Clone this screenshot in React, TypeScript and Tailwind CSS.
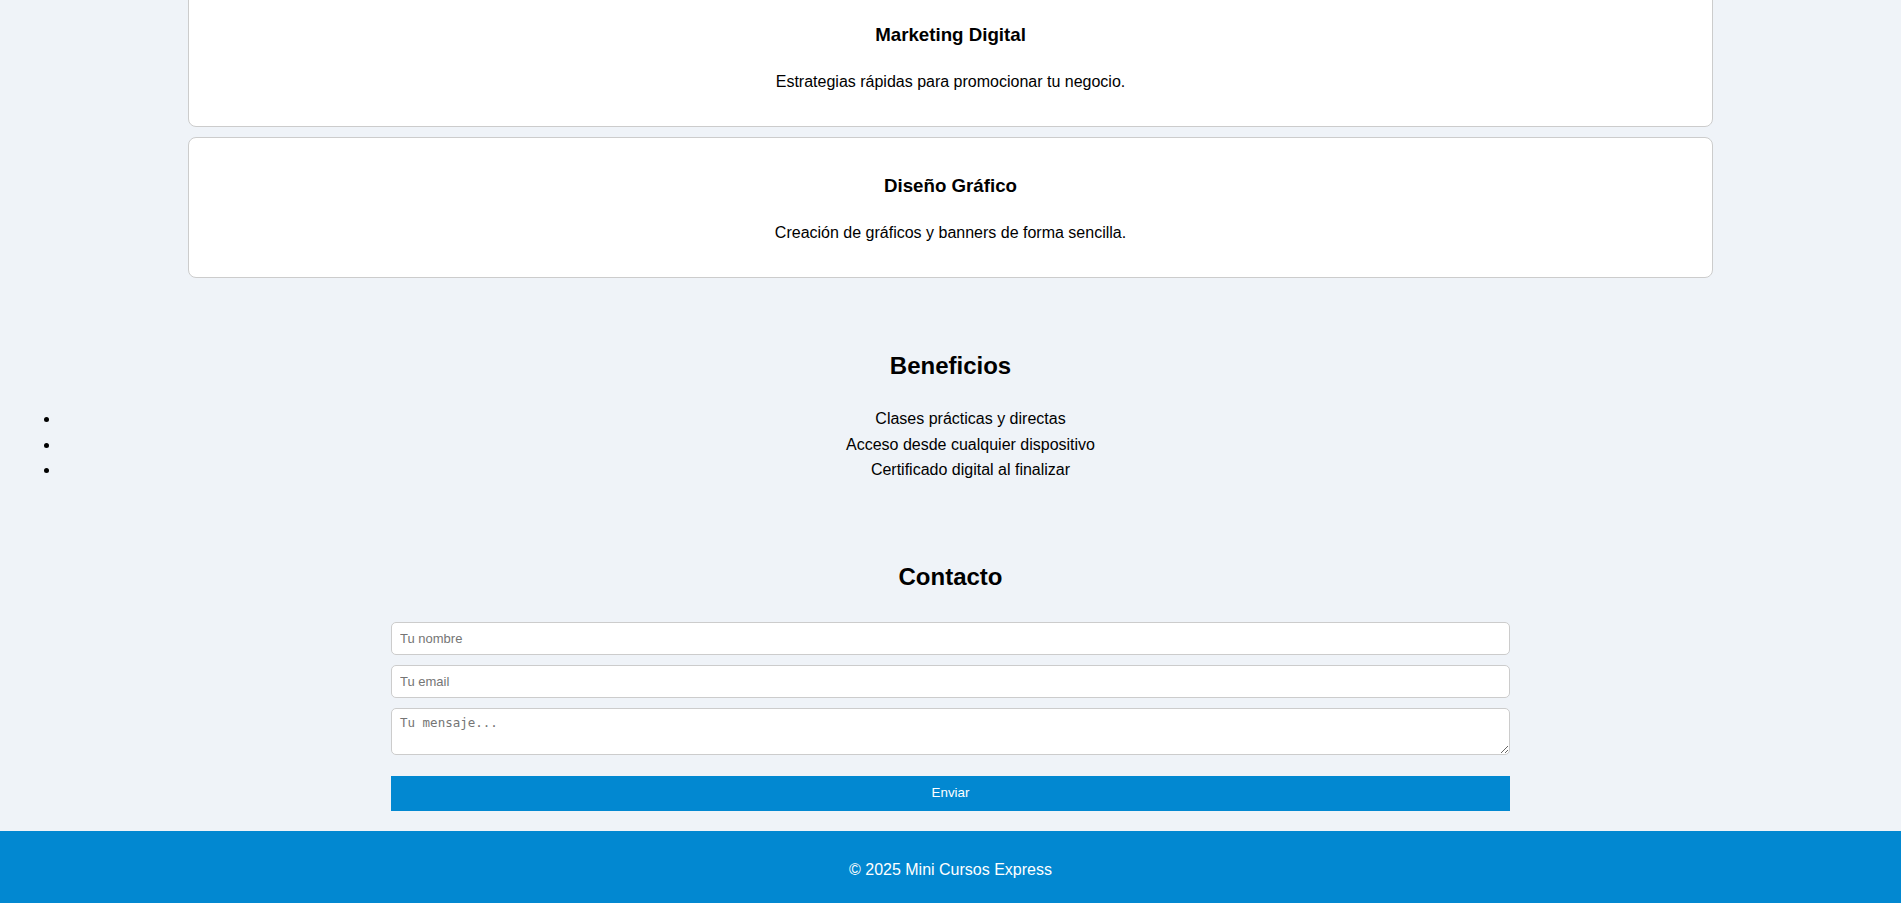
import React from "react";

const cursos = [
  { t: "Marketing Digital", d: "Estrategias rápidas para promocionar tu negocio." },
  { t: "Diseño Gráfico", d: "Creación de gráficos y banners de forma sencilla." },
];

export default function App() {
  return (
    <div className="min-h-screen overflow-hidden bg-[#eff3f8] text-black font-['Liberation_Sans',Arial,sans-serif] leading-[1.6]">
      <section className="w-[1525px] mx-auto -mt-[14px] flex flex-col gap-[10px]">
        {cursos.map((c) => (
          <div key={c.t} className="bg-white border border-[#cccccc] rounded-lg pt-[17px] px-4 pb-4 text-center">
            <h3 className="text-[18.72px] font-bold leading-[28px] mt-[17px] mb-[20px]">{c.t}</h3>
            <p className="text-[16px] leading-[25px] mb-4">{c.d}</p>
          </div>
        ))}
      </section>

      <section className="mt-[74px] text-center">
        <h2 className="text-[24px] font-bold leading-[28px]">Beneficios</h2>
        <ul className="mt-[26px] ml-[20px] list-disc pl-10 pr-[20px] text-[16px] leading-[25.5px]">
          <li>Clases prácticas y directas</li>
          <li>Acceso desde cualquier dispositivo</li>
          <li>Certificado digital al finalizar</li>
        </ul>
      </section>

      <section className="mt-[80px] text-center">
        <h2 className="text-[24px] font-bold leading-[28px]">Contacto</h2>
        <form className="w-[1119px] mx-auto mt-[31px] flex flex-col" onSubmit={(e) => e.preventDefault()}>
          <input
            type="text"
            placeholder="Tu nombre"
            className="w-full h-[33px] px-2 bg-white border border-[#cccccc] rounded-[5px] text-[13px] font-['Liberation_Sans',Arial,sans-serif] placeholder:text-[#757575] outline-none"
          />
          <input
            type="email"
            placeholder="Tu email"
            className="mt-[10px] w-full h-[33px] px-2 bg-white border border-[#cccccc] rounded-[5px] text-[13px] font-['Liberation_Sans',Arial,sans-serif] placeholder:text-[#757575] outline-none"
          />
          <textarea
            placeholder="Tu mensaje..."
            className="mt-[10px] w-full h-[47px] px-2 py-[6px] bg-white border border-[#cccccc] rounded-[5px] text-[12.5px] leading-[16px] font-['DejaVu_Sans_Mono',monospace] placeholder:text-[#757575] outline-none resize-y"
          />
          <button
            type="submit"
            className="mt-[21px] w-full h-[35px] bg-[#0288d1] text-white text-[13.33px] font-['Liberation_Sans',Arial,sans-serif]"
          >
            Enviar
          </button>
        </form>
      </section>

      <footer className="mt-[20px] h-[72px] pt-[26px] bg-[#0288d1] text-white text-center text-[16px] leading-[25.6px]">
        © 2025 Mini Cursos Express
      </footer>
    </div>
  );
}
